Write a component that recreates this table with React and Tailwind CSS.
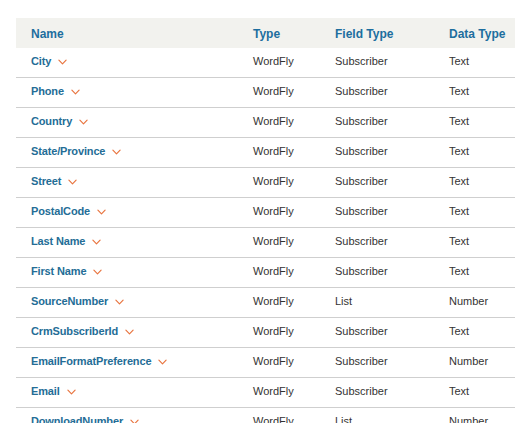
import React from 'react';

const ROWS = [
  ['City', 'WordFly', 'Subscriber', 'Text'],
  ['Phone', 'WordFly', 'Subscriber', 'Text'],
  ['Country', 'WordFly', 'Subscriber', 'Text'],
  ['State/Province', 'WordFly', 'Subscriber', 'Text'],
  ['Street', 'WordFly', 'Subscriber', 'Text'],
  ['PostalCode', 'WordFly', 'Subscriber', 'Text'],
  ['Last Name', 'WordFly', 'Subscriber', 'Text'],
  ['First Name', 'WordFly', 'Subscriber', 'Text'],
  ['SourceNumber', 'WordFly', 'List', 'Number'],
  ['CrmSubscriberId', 'WordFly', 'Subscriber', 'Text'],
  ['EmailFormatPreference', 'WordFly', 'Subscriber', 'Number'],
  ['Email', 'WordFly', 'Subscriber', 'Text'],
  ['DownloadNumber', 'WordFly', 'List', 'Number'],
];

// small orange chevron next to field names
function Chevron() {
  return (
    <svg viewBox="0 0 10 6" className="w-[9px] h-[6px] ml-[7px] shrink-0" fill="none"
      stroke="#e8743f" strokeWidth="1.3" strokeLinecap="round" strokeLinejoin="round">
      <path d="M1 1l4 4 4-4" />
    </svg>
  );
}

const COLS = 'grid grid-cols-[222px_82px_114px_1fr]';

export default function App() {
  return (
    <div className="min-h-screen bg-white pt-[18px] pl-[16px]" style={{ fontFamily: '"Liberation Sans", Arial, sans-serif' }}>
      {/* ── Header ── */}
      <div className={`${COLS} h-[30px] items-center bg-[#f2f2ee] text-[12px] font-bold text-[#1d6e9e] pt-[1px]`}>
        <div className="pl-[15px]">Name</div>
        <div className="pl-[15px]">Type</div>
        <div className="pl-[15px]">Field Type</div>
        <div className="pl-[15px]">Data Type</div>
      </div>

      {/* ── Rows ── */}
      {ROWS.map(([name, type, field, data]) => (
        <div key={name} className={`${COLS} h-[30px] items-center border-b border-[#cfcfcf] text-[11px] text-[#333] pb-[2px]`}>
          <div className="pl-[15px] flex items-center font-bold text-[#246d96] tracking-[-0.15px]">
            {name}
            <Chevron />
          </div>
          <div className="pl-[15px]">{type}</div>
          <div className="pl-[15px]">{field}</div>
          <div className="pl-[15px]">{data}</div>
        </div>
      ))}
    </div>
  );
}
